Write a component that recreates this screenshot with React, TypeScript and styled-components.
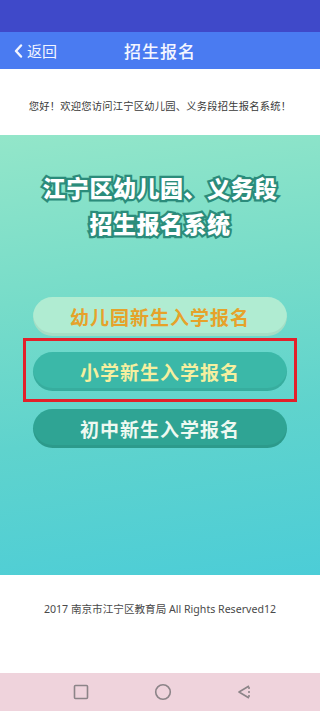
import React from "react";
import styled, { createGlobalStyle } from "styled-components";

const Global = createGlobalStyle`
  html, body { margin: 0; padding: 0; background: #fff; }
  body { font-family: "Noto Sans CJK SC", "Noto Sans", sans-serif; }
  * { box-sizing: border-box; }
`;

const Page = styled.div`
  width: 320px;
  height: 711px;
  display: flex;
  flex-direction: column;
  overflow: hidden;
`;

const StatusBar = styled.div`
  height: 32px;
  flex: none;
  background: #3f49c9;
`;

const Header = styled.header`
  height: 37px;
  flex: none;
  background: #4a7bf1;
  display: grid;
  grid-template-columns: 1fr auto 1fr;
  align-items: center;
  color: #fff;
`;

const Back = styled.div`
  display: flex;
  align-items: center;
  gap: 4px;
  padding-left: 14px;
  font-size: 15px;
  color: #f2f5ff;
`;

const Title = styled.h1`
  margin: 0;
  font-size: 17px;
  font-weight: 500;
  letter-spacing: 1px;
  color: #f4f6ff;
`;

const Welcome = styled.div`
  height: 66px;
  flex: none;
  display: flex;
  align-items: center;
  justify-content: center;
  padding-top: 7px;
  font-size: 10.3px;
  color: #3a3a3a;
  letter-spacing: 0.2px;
`;

const Panel = styled.section`
  height: 440px;
  flex: none;
  background: linear-gradient(172deg, #93e6c9 0%, #77dcc9 35%, #5fd3cd 65%, #4ccdd7 100%);
  display: flex;
  flex-direction: column;
  align-items: center;
  padding-top: 34px;
`;

const BigTitle = styled.div`
  font-family: "Noto Sans CJK SC", sans-serif;
  font-weight: 900;
  font-size: 23px;
  line-height: 36px;
  letter-spacing: 0.5px;
  text-align: center;
  color: #ffffff;
  -webkit-text-stroke: 4.5px #2b8c7b;
  paint-order: stroke fill;
`;

const Buttons = styled.div`
  align-self: stretch;
  display: flex;
  flex-direction: column;
  padding: 0 33px;
  margin-top: 56px;
`;

const Pill = styled.div<{ $bg: string; $fg: string }>`
  height: 39px;
  border-radius: 20px;
  background: ${(p) => p.$bg};
  color: ${(p) => p.$fg};
  display: flex;
  align-items: center;
  justify-content: center;
  font-size: 19px;
  font-weight: 700;
  letter-spacing: 1px;
  box-shadow: inset 0 -3px 0 rgba(0, 0, 0, 0.06);
`;

const Highlight = styled.div`
  margin: 2px -10px 7px -10px;
  border: 3px solid #e3202a;
  padding: 11px 7px 8px 7px;
`;

const Footer = styled.footer`
  height: 98px;
  flex: none;
  display: flex;
  justify-content: center;
  padding-top: 26px;
  font-family: "Noto Sans", "Noto Sans CJK SC", sans-serif;
  font-size: 10.6px;
  color: #4a4a4a;
`;

const NavBar = styled.nav`
  height: 38px;
  flex: none;
  background: #efd3dc;
  display: flex;
  justify-content: center;
  align-items: center;
  gap: 65px;
  padding-left: 6px;
`;

export default function App() {
  return (
    <Page>
      <Global />
      <StatusBar />
      <Header>
        <Back>
          <svg width="9" height="14" viewBox="0 0 9 14">
            <path d="M7 1.5 L2 7 L7 12.5" fill="none" stroke="#f2f5ff" strokeWidth="2.4" strokeLinecap="round" strokeLinejoin="round" />
          </svg>
          <span>返回</span>
        </Back>
        <Title>招生报名</Title>
        <div />
      </Header>
      <Welcome>您好！欢迎您访问江宁区幼儿园、义务段招生报名系统！</Welcome>
      <Panel>
        <BigTitle>
          江宁区幼儿园、义务段
          <br />
          招生报名系统
        </BigTitle>
        <Buttons>
          <Pill $bg="#b0ecd2" $fg="#e6a22a">幼儿园新生入学报名</Pill>
          <Highlight>
            <Pill $bg="#3bb8a8" $fg="#f6ef9f">小学新生入学报名</Pill>
          </Highlight>
          <Pill $bg="#2fa494" $fg="#eef9f1">初中新生入学报名</Pill>
        </Buttons>
      </Panel>
      <Footer>2017 南京市江宁区教育局 All Rights Reserved12</Footer>
      <NavBar>
        <svg width="16" height="16" viewBox="0 0 16 16">
          <rect x="1.5" y="1.5" width="13" height="13" rx="1" fill="none" stroke="#8c8488" strokeWidth="1.6" />
        </svg>
        <svg width="18" height="18" viewBox="0 0 18 18">
          <circle cx="9" cy="9" r="7.3" fill="none" stroke="#8c8488" strokeWidth="1.6" />
        </svg>
        <svg width="16" height="16" viewBox="0 0 16 16">
          <path d="M12 2 L2 8 L12 14" fill="none" stroke="#8c8488" strokeWidth="1.6" strokeLinejoin="round" />
          <path d="M12 3 V5 M12 7 V9 M12 11 V13" stroke="#8c8488" strokeWidth="1.6" />
        </svg>
      </NavBar>
    </Page>
  );
}
